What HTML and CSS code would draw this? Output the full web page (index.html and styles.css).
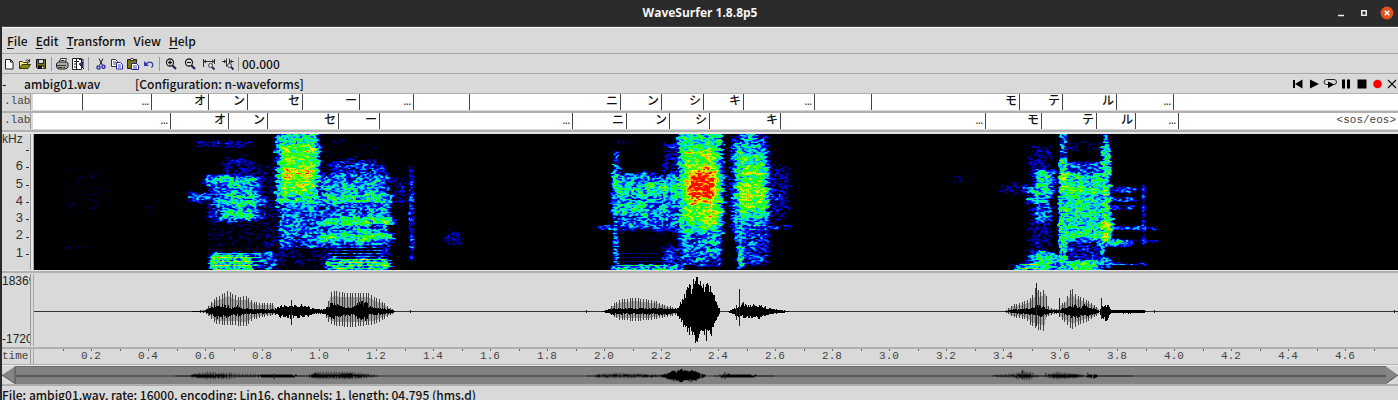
FILE: index.html
```html
<!DOCTYPE html>
<html lang="en">
<head>
<meta charset="utf-8">
<title>WaveSurfer 1.8.8p5</title>
<link rel="stylesheet" href="styles.css">
</head>
<body>
<header class="titlebar">
  <h1 class="title">WaveSurfer 1.8.8p5</h1>
  <div class="window-controls">
    <button class="win-btn" aria-label="Minimize"><svg width="14" height="14"><path d="M4 9.500h6" stroke="#eee" stroke-width="1.500"/></svg></button>
    <button class="win-btn" aria-label="Maximize"><svg width="14" height="14"><rect x="4.750" y="4.750" width="4.500" height="4.500" fill="none" stroke="#eee" stroke-width="1.500"/></svg></button>
    <button class="win-btn" aria-label="Close window"><svg width="14" height="14"><circle cx="7" cy="7" r="6.500" fill="#e2511c"/><path d="M4.700 4.700l4.600 4.600M9.300 4.700l-4.600 4.600" stroke="#fff" stroke-width="1.500"/></svg></button>
  </div>
</header>
<nav class="menubar">
  <button class="menu"><u>F</u>ile</button>
  <button class="menu"><u>E</u>dit</button>
  <button class="menu"><u>T</u>ransform</button>
  <button class="menu">View</button>
  <button class="menu"><u>H</u>elp</button>
</nav>
<div class="toolbar">
  <div class="tools">
    <button class="tool" aria-label="New"><svg width="14" height="14"><path d="M3.500 2.500h5l2.500 2.500v7h-7.500z" fill="#fff" stroke="#222"/><path d="M8.500 2.500v2.500h2.500" fill="none" stroke="#222"/></svg></button>
    <button class="tool" aria-label="Open"><svg width="14" height="14"><path d="M1.500 11.500v-7h3l1 1h4v2" fill="#f4ee8a" stroke="#3a3808"/><path d="M1.500 11.500l2.500-4h8.500l-2.500 4z" fill="#8b8a12" stroke="#3a3808"/><path d="M7.500 3.500q2-2 4 1M11.500 2v3h-2.500" fill="none" stroke="#333"/></svg></button>
    <button class="tool" aria-label="Save"><svg width="14" height="14"><path d="M2.500 2.500h9v9h-8l-1-1z" fill="#77761a" stroke="#111"/><path d="M4.500 2.500h5v4h-5z" fill="#ddd" stroke="#222"/><path d="M4 8.500h6v3h-6z" fill="#111"/><path d="M8 9.500h1.500v2h-1.500z" fill="#eee"/></svg></button>
  </div>
  <div class="tools">
    <button class="tool" aria-label="Print"><svg width="14" height="14"><path d="M4 6l1.500-4.500h6l-1.500 4.500z" fill="#fff" stroke="#333"/><path d="M1.500 6.500l2-1.500h8l1.500 1v4l-2 2h-8l-1.500-2z" fill="#aaa" stroke="#222"/><path d="M2 8.500h9M5.500 3.500h4M3 10.500h7" stroke="#333"/><path d="M7 10h2" stroke="#c9c520"/></svg></button>
    <button class="tool" aria-label="Print preview"><svg width="14" height="14"><path d="M1.500 1.500h9v11h-9z" fill="#fff" stroke="#222"/><path d="M3 4.500h5M5.500 2v10M3 7h2M3 10h2" stroke="#222"/><path d="M8 2.500h4M12 2v4M8 7l4-2v6zM10 9l3 3" fill="#334" stroke="#225"/></svg></button>
  </div>
  <div class="tools tools-edit">
    <button class="tool" aria-label="Cut"><svg width="14" height="14"><path d="M5 1.500l3.500 7M9 1.500l-3.500 7" stroke="#222" fill="none"/><circle cx="4.500" cy="10.500" r="1.600" fill="none" stroke="#22a" stroke-width="1.300"/><circle cx="9.500" cy="9.800" r="1.600" fill="none" stroke="#22a" stroke-width="1.300"/></svg></button>
    <button class="tool" aria-label="Copy"><svg width="14" height="14"><path d="M1.500 2.500h4l2 2v5h-6z" fill="#fff" stroke="#333"/><path d="M3 5h3M3 7h3" stroke="#555"/><path d="M6.500 5.500h4l2 2v4.500h-6z" fill="#fff" stroke="#22a"/><path d="M8 8h3M8 10h3" stroke="#449"/></svg></button>
    <button class="tool" aria-label="Paste"><svg width="14" height="14"><path d="M1.500 2.500h9v9h-9z" fill="#77761a" stroke="#222"/><path d="M4 3.500l1-2h2l1 2z" fill="#eee" stroke="#333"/><path d="M5.500 6.500h5l2 2v4h-7z" fill="#fff" stroke="#22a"/><path d="M7 9h4M7 11h4" stroke="#449"/></svg></button>
    <button class="tool" aria-label="Undo"><svg width="14" height="14"><path d="M3.500 7.500q4-4 7-1q1 2-1 4" fill="none" stroke="#33a" stroke-width="1.200"/><path d="M2 4v5h5z" fill="#33a"/></svg></button>
  </div>
  <div class="tools tools-wide">
    <button class="tool" aria-label="Zoom in"><svg width="14" height="14"><circle cx="6" cy="5.500" r="3.500" fill="#eee" stroke="#222" stroke-width="1.300"/><path d="M4 5.500h4M6 3.500v4" stroke="#111" stroke-width="1.300"/><path d="M8.500 8.500l3.500 3.500" stroke="#225" stroke-width="2.200"/></svg></button>
    <button class="tool" aria-label="Zoom out"><svg width="14" height="14"><circle cx="6" cy="5.500" r="3.500" fill="#eee" stroke="#222" stroke-width="1.300"/><path d="M4 5.500h4" stroke="#111" stroke-width="1.300"/><path d="M8.500 8.500l3.500 3.500" stroke="#225" stroke-width="2.200"/></svg></button>
    <button class="tool" aria-label="Zoom to all"><svg width="14" height="14"><path d="M1.500 2v8M12.500 2v5M2 4.500h10M4 3l-2 1.500 2 1.500M10 3l2 1.500-2 1.500" fill="none" stroke="#333"/><circle cx="8.500" cy="8.500" r="2" fill="#ddd" stroke="#444"/><path d="M10 10l2.500 2.500" stroke="#225" stroke-width="1.800"/></svg></button>
    <button class="tool" aria-label="Zoom to selection"><svg width="14" height="14"><path d="M5.500 1.500v8M8.500 1.500v6M1 4.500h4M9 4.500h4M3 3l2 1.500-2 1.500M11 3l-2 1.500 2 1.500" fill="none" stroke="#333"/><circle cx="8.500" cy="8.500" r="2" fill="#ddd" stroke="#444"/><path d="M10 10l2.500 2.500" stroke="#225" stroke-width="1.800"/></svg></button>
  </div>
  <output class="clock">00.000</output>
</div>
<main class="sound">
  <div class="pane-head">
    <span class="dash">-</span>
    <span class="sound-name">ambig01.wav</span>
    <span>[Configuration: n-waveforms]</span>
    <div class="transport">
      <button class="play" aria-label="To start"><svg width="14" height="12"><path d="M2 2h2v8h-2zM11.500 1.500v9l-7.500-4.500z"/></svg></button>
      <button class="play" aria-label="Play"><svg width="14" height="12"><path d="M3 1.500l9 4.500-9 4.500z"/></svg></button>
      <button class="play" aria-label="Loop"><svg width="14" height="12"><path d="M5 6.500h-1.500q-2.500 0-2.500-2.300t2.500-2.700h7.500q2.500 0 2.500 2.500t-2.500 2.500" fill="none" stroke="#222"/><path d="M5 3.500l6.500 3-6.500 3.500z"/></svg></button>
      <button class="play" aria-label="Pause"><svg width="14" height="12"><path d="M3 1.500h3v9h-3zM8 1.500h3v9h-3z"/></svg></button>
      <button class="play" aria-label="Stop"><svg width="14" height="12"><path d="M2.500 1.500h9v9h-9z"/></svg></button>
      <button class="play" aria-label="Record"><svg width="14" height="12"><circle cx="6.500" cy="6" r="4.300" fill="#f00"/></svg></button>
      <button class="play play-last" aria-label="Close sound"><svg width="12" height="12"><path d="M2 2l8 8M10 2l-8 8" stroke="#111" stroke-width="1.200"/></svg></button>
    </div>
  </div>
  <section class="track track-label">
    <div class="side mono">.lab</div>
    <div class="labels" style="grid-template-columns:50fr 69fr 57fr 39fr 55fr 57fr 54fr 56fr 151fr 41fr 42fr 40fr 71fr 57fr 148fr 43fr 54fr 57fr 224fr">
      <span></span><span>…</span><span>オ</span><span>ン</span><span>セ</span><span>ー</span><span>…</span><span></span><span>ニ</span><span>ン</span><span>シ</span><span>キ</span><span>…</span><span></span><span>モ</span><span>テ</span><span>ル</span><span>…</span><span></span>
    </div>
  </section>
  <section class="track track-label">
    <div class="side mono">.lab</div>
    <div class="labels" style="grid-template-columns:138fr 58fr 39fr 71fr 41fr 193fr 54fr 43fr 40fr 71fr 205fr 56fr 55fr 39fr 43fr 219fr">
      <span>…</span><span>オ</span><span>ン</span><span>セ</span><span>ー</span><span>…</span><span>ニ</span><span>ン</span><span>シ</span><span>キ</span><span>…</span><span>モ</span><span>テ</span><span>ル</span><span>…</span><span class="mono">&lt;sos/eos&gt;</span>
    </div>
  </section>
  <section class="track track-spec">
    <div class="side khz"><span class="unit">kHz</span><span></span><span>6</span><span>5</span><span>4</span><span>3</span><span>2</span><span>1</span></div>
    <div class="plot"><canvas id="spec" width="1364" height="136"></canvas></div>
  </section>
  <section class="track track-wave">
    <div class="side range"><span>18369</span><span>-17205</span></div>
    <div class="plot"><canvas id="wave" width="1364" height="72"></canvas></div>
  </section>
  <section class="track track-time">
    <div class="side mono">time</div>
    <div class="plot times mono">
      <i></i><span>0.2</span><span>0.4</span><span>0.6</span><span>0.8</span><span>1.0</span><span>1.2</span><span>1.4</span><span>1.6</span><span>1.8</span><span>2.0</span><span>2.2</span><span>2.4</span><span>2.6</span><span>2.8</span><span>3.0</span><span>3.2</span><span>3.4</span><span>3.6</span><span>3.8</span><span>4.0</span><span>4.2</span><span>4.4</span><span>4.6</span><i class="edge"></i>
    </div>
  </section>
  <div class="scroller">
    <button class="arrow" aria-label="Scroll left"><svg width="13" height="18"><path d="M0 9l13-8.500v17z" fill="#858585"/><path d="M0 9l13 8.500v-17" fill="none" stroke="#555"/></svg></button>
    <div class="trough"><canvas id="overview" width="1371" height="18"></canvas></div>
    <button class="arrow" aria-label="Scroll right"><svg width="12" height="18"><path d="M12 9l-12-8.500v17z" fill="#858585"/><path d="M0 17.500l12-8.500" stroke="#555"/></svg></button>
  </div>
</main>
<footer class="status">File: ambig01.wav, rate: 16000, encoding: Lin16, channels: 1, length: 04.795 (hms.d)</footer>
<script src="plots.js"></script>
</body>
</html>
```
FILE: styles.css
```css
* { box-sizing: border-box; }
body {
  margin: 0;
  height: 100vh;
  overflow: hidden;
  display: flex;
  flex-direction: column;
  background: #d9d9d9;
  border-left: 2px solid #2a2a2c;
  color: #111;
  font: 500 12px/18px "Noto Sans CJK JP", "Noto Sans", sans-serif;
}
button { border: 0; padding: 0; background: none; color: inherit; font: inherit; }
svg, canvas { display: block; }
.mono { font: 11px/14px "Liberation Mono", monospace; color: #444; }

.titlebar {
  flex: none;
  height: 27px;
  display: grid;
  grid-template-columns: 1fr auto 1fr;
  align-items: center;
  background: #2b2b2b;
  border-bottom: 1px solid #444;
}
.title { grid-column: 2; margin: 0; color: #f4f4f4; font: bold 12px/18px "Open Sans", sans-serif; }
.window-controls { display: flex; justify-content: flex-end; gap: 9px; padding-right: 4px; }
.win-btn { width: 14px; height: 14px; }

.menubar {
  flex: none;
  height: 27px;
  display: flex;
  align-items: center;
  gap: 8px;
  padding-left: 5px;
  border-top: 1px solid #f4f4f4;
  border-bottom: 1px solid #a8a8a8;
}
.menu u { text-underline-offset: 2px; }
.toolbar {
  flex: none;
  height: 20px;
  display: flex;
  align-items: center;
  border-bottom: 1px solid #a8a8a8;
}
.tools { display: flex; gap: 1px; padding-right: 2px; margin-right: 3px; border-right: 1px solid #999; }
.tool { width: 15px; height: 14px; }
.tools-edit { padding-left: 2px; }
.tools-wide { gap: 4px; padding-left: 1px; }

.sound { flex: none; display: flex; flex-direction: column; }
.pane-head { height: 20px; display: flex; align-items: center; border-bottom: 1px solid #b0b0b0; }
.dash { width: 22px; }
.sound-name { width: 111px; }
.transport { margin-left: auto; display: flex; }
.play { width: 16px; display: grid; place-items: center; }
.play-last { width: 12px; }

.track { display: grid; grid-template-columns: 29px minmax(0, 1fr); column-gap: 2px; border-bottom: 2px solid #b0b0b0; }
.side { border-right: 1px solid #999; overflow: hidden; white-space: nowrap; }
.plot { min-width: 0; overflow: hidden; border-left: 1px solid #f0a020; }
.plot canvas { width: 100%; height: 100%; }
.track-label { height: 19px; padding-bottom: 1px; }
.track-label .side { padding-left: 2px; }
.labels { display: grid; background: #fff; font: 500 12px/16px "Liberation Mono", "Noto Sans CJK JP", sans-serif; }
.labels span { min-width: 0; padding-right: 2px; text-align: right; border-right: 1px solid #444; overflow: hidden; }
.labels span:last-child { border-right: 0; }

.track-spec { height: 141px; padding: 2px 0 1px; background: #e6e6e6; }
.track-spec .plot { background: #000; }
.khz {
  display: grid;
  grid-template-rows: 8fr repeat(7, minmax(0, 17fr)) 7fr;
  background: #d9d9d9;
  font: 13px/13px "Liberation Sans", sans-serif;
  color: #333;
}
.khz span { padding-right: 7px; text-align: right; background: linear-gradient(#333, #333) right 1px center / 3px 1px no-repeat; }
.khz .unit { height: 8px; padding: 0; font-size: 12px; line-height: 11px; text-align: left; background: none; }

.track-wave { height: 76px; padding: 1px 0; }
.range { display: flex; flex-direction: column; justify-content: space-between; font: 12px/14px "Liberation Sans", sans-serif; color: #222; }
.track-time { height: 16px; border-bottom-width: 1px; }
.times { display: grid; grid-template-columns: 57fr repeat(23, 114fr) 49fr; text-align: center; }
.times span {
  min-width: 0;
  background: linear-gradient(#666, #666) left top / 1px 2px no-repeat, linear-gradient(#666, #666) center top / 1px 2px no-repeat;
}
.edge { background: linear-gradient(#666, #666) left top / 1px 2px no-repeat; }
.scroller { height: 20px; display: flex; align-items: center; border-top: 1px solid #eee; border-bottom: 1px solid #b0b0b0; }
.arrow { flex: none; }
.trough { flex: 1; min-width: 0; height: 18px; background: #828282; border: solid #666; border-width: 1px 0 0 1px; }
.trough canvas { width: 100%; height: 100%; }
.status { flex: none; border-top: 1px solid #aaa; white-space: nowrap; }
```
FILE: plots.js
```js
const LEFT = 34;
const TOP = 135;

function hash(x, y, s) {
  let h = Math.imul(x, 374761393) + Math.imul(y, 668265263) + Math.imul(s, 974711);
  h = Math.imul(h ^ (h >>> 13), 1274126177);
  return ((h ^ (h >>> 16)) >>> 0) / 4294967296;
}
function noise(x, y, s) {
  const xi = Math.floor(x), yi = Math.floor(y), fx = x - xi, fy = y - yi;
  const a = hash(xi, yi, s) * (1 - fx) + hash(xi + 1, yi, s) * fx;
  const b = hash(xi, yi + 1, s) * (1 - fx) + hash(xi + 1, yi + 1, s) * fx;
  return a * (1 - fy) + b * fy;
}

// Energy regions: x0, x1, y0, y1, x softness, y softness, level
const boxes = [
  [226, 246, 182, 216, 28, 12, .45], [214, 248, 179, 183, 18, 5, .5], [226, 250, 197, 205, 26, 8, .52],
  [194, 208, 196, 199, 12, 6, .42], [226, 246, 212, 217, 14, 6, .53], [200, 250, 143, 146, 12, 4, .25],
  [228, 248, 163, 178, 16, 12, .26], [212, 256, 225, 255, 18, 14, .19], [214, 248, 257, 269, 8, 6, .58],
  [250, 273, 255, 268, 6, 5, .4], [258, 275, 170, 268, 8, 20, .22],
  [279, 315, 136, 203, 7, 14, .52], [285, 310, 152, 188, 14, 24, .66], [287, 310, 172, 179, 16, 14, .73],
  [282, 322, 200, 244, 8, 10, .4], [284, 312, 238, 246, 12, 6, .4], [280, 325, 245, 264, 8, 12, .22],
  [325, 385, 178, 243, 9, 10, .42], [340, 372, 166, 178, 24, 12, .33], [335, 378, 182, 200, 12, 8, .47],
  [328, 386, 196, 201, 10, 5, .55], [330, 386, 219, 224, 14, 4, .58], [322, 388, 235, 240, 10, 5, .56],
  [325, 386, 243, 263, 8, 8, .27], [330, 386, 261, 269, 8, 5, .53], [387, 402, 183, 200, 12, 12, .24],
  [410, 412.500, 175, 245, 3, 16, .33],
  [614, 616.500, 158, 266, 3, 12, .4], [614, 618, 178, 211, 5, 16, .48], [618, 674, 180, 224, 8, 12, .43],
  [622, 668, 190, 195, 14, 8, .52], [618, 645, 204, 211, 12, 6, .52], [608, 680, 227, 229, 20, 3, .37],
  [650, 678, 185, 192, 14, 6, .57], [618, 676, 230, 262, 12, 10, .16], [667, 677, 250, 269, 10, 10, .33],
  [622, 660, 142, 165, 16, 12, .15], [612, 680, 267, 270, 6, 4, .5], [666, 676, 150, 180, 7, 14, .28],
  [682, 717, 136, 226, 9, 26, .54], [688, 712, 156, 212, 14, 32, .69], [698, 704, 182, 190, 28, 36, .93],
  [706, 714, 200, 222, 14, 16, .68], [685, 717, 226, 256, 8, 18, .42],
  [737, 762, 152, 220, 12, 28, .47], [741, 760, 164, 212, 14, 22, .59], [744, 756, 172, 176, 12, 10, .68], [744, 760, 188, 206, 14, 14, .68],
  [742, 758, 134, 150, 8, 12, .44], [735, 737, 145, 236, 2, 12, .48], [739, 742, 190, 264, 5, 10, .46],
  [743, 762, 228, 260, 14, 12, .34], [764, 780, 178, 210, 20, 22, .28], [735, 785, 227, 228, 12, 4, .33],
  [1040, 1047, 175, 194, 12, 10, .54], [1030, 1046, 189, 193, 16, 5, .42], [1032, 1040, 199, 203, 12, 4, .48],
  [1040, 1047, 209, 220, 10, 8, .42], [1034, 1046, 152, 262, 14, 12, .25], [1040, 1047, 257, 269, 18, 8, .56],
  [1024, 1047, 266, 270, 20, 5, .54], [1005, 1026, 187, 192, 16, 9, .23],
  [1060, 1065, 162, 270, 4, 14, .55], [1062, 1063, 134, 165, 5, 14, .43], [1061, 1066, 174, 184, 5, 8, .68],
  [1064, 1099, 178, 236, 6, 12, .52], [1068, 1096, 190, 194, 8, 5, .62], [1069, 1097, 168, 176, 10, 10, .4],
  [1066, 1099, 234, 237, 6, 5, .6], [1064, 1099, 242, 262, 6, 6, .3], [1068, 1095, 263, 269, 8, 5, .56],
  [1067, 1100, 144, 150, 8, 5, .2], [1104, 1107, 155, 220, 6, 16, .57], [1105, 1106, 134, 155, 5, 10, .43],
  [1103, 1108, 223, 238, 7, 8, .68], [1101, 1103, 239, 266, 3, 10, .45], [1107, 1109, 260, 266, 5, 5, .46],
  [1108, 1130, 189, 192, 8, 3, .38], [1108, 1132, 199, 201, 8, 3, .36], [1108, 1130, 207, 209, 8, 3, .34],
  [1108, 1152, 228, 229, 10, 3, .37], [1108, 1128, 242, 245, 8, 4, .42], [1120, 1156, 241, 242, 8, 2, .31],
  [1108, 1142, 264, 265, 8, 3, .34], [1142.500, 1144, 188, 242, 3, 8, .3],
  [72, 102, 172, 205, 28, 20, .17], [147, 151, 208, 212, 5, 5, .2], [448, 458, 234, 242, 10, 8, .23],
  [40, 90, 248, 249, 8, 3, .18], [955, 960, 178, 182, 5, 4, .22], [330, 375, 140, 160, 16, 10, .17],
  [450, 458, 180, 190, 8, 8, .15], [618, 630, 142, 144, 8, 3, .2]
];
const dots = [[411, 183], [411, 200], [411, 220], [411, 237], [411, 258], [1143, 190], [1143, 208], [1143, 229], [1143, 241]];
// Harmonic line areas: x0, x1, y0, y1, spacing
const harmonics = [[212, 268, 251, 270, 4], [325, 388, 246, 270, 3], [612, 668, 251, 270, 4], [1014, 1048, 262, 270, 4], [1110, 1144, 262, 270, 4]];

const stops = [[0, 0, 0, 0], [.2, 0, 0, 0], [.31, 0, 0, 190], [.38, 0, 25, 255], [.46, 0, 190, 255], [.53, 0, 250, 190],
  [.6, 0, 255, 20], [.68, 90, 255, 0], [.77, 240, 250, 0], [.86, 255, 130, 0], [.91, 255, 10, 0], [3, 255, 0, 0]];
function color(v) {
  let i = 1;
  while (v > stops[i][0]) i++;
  const a = stops[i - 1], b = stops[i], t = (v - a[0]) / (b[0] - a[0]);
  return [1, 2, 3].map(k => a[k] + (b[k] - a[k]) * t);
}

function drawSpectrogram() {
  const c = document.getElementById("spec"), g = c.getContext("2d"), w = c.width, h = c.height;
  const field = new Float32Array(w * h);
  for (const [x0, x1, y0, y1, sx, sy, level] of boxes) {
    for (let y = Math.max(0, Math.floor(y0 - sy - TOP - 2)); y < Math.min(h, y1 + sy - TOP + 2); y++) {
      for (let x = Math.max(0, Math.floor(x0 - sx - LEFT - 3)); x < Math.min(w, x1 + sx - LEFT + 3); x++) {
        const px = x + LEFT + (noise(x / 6, y / 1.500, 11) - .5) * Math.min(6, sx * .8);
        const py = y + TOP + (noise(x / 5, y / 3, 12) - .5) * Math.min(4, sy * .6);
        const dx = Math.max(x0 - px, px - x1, 0) / sx, dy = Math.max(y0 - py, py - y1, 0) / sy;
        const d = dx * dx + dy * dy;
        const v = d >= 1 ? 0 : level * (1 - d) * (1 - d * .3);
        if (v > field[y * w + x]) field[y * w + x] = v;
      }
    }
  }
  const img = g.createImageData(w, h);
  for (let y = 0; y < h; y++) {
    for (let x = 0; x < w; x++) {
      const px = x + LEFT, py = y + TOP;
      let v = field[y * w + x];
      if (v > 0) {
        const n = noise(x / 2.300, y / 1.300, 1) * .75 + noise(x / 7, y / 2.500, 7) * .25 - .5;
        v += n * .54 * Math.min(1, v * 2.800);
      }
      for (const [x0, x1, y0, y1, gap] of harmonics) {
        if (px >= x0 && px < x1 && py >= y0 && py < y1) {
          const depth = (py - y0) / (y1 - y0), fade = Math.min(1, (px - x0) / 8, (x1 - px) / 12);
          v += fade * ((py - y0) % gap === gap - 1 ? .1 + .05 * depth : -.07);
        }
      }
      for (const [dx, dy] of dots) {
        const d = Math.hypot(px - dx, py - dy);
        if (d < 4) v = Math.max(v, .46 - d * .07);
      }
      const rgb = color(Math.max(0, v)), o = (y * w + x) * 4;
      img.data[o] = rgb[0]; img.data[o + 1] = rgb[1]; img.data[o + 2] = rgb[2]; img.data[o + 3] = 255;
    }
  }
  g.putImageData(img, 0, 0);
}

// Envelopes are lists of [x, height] above and below the axis; core is the dense inner part.
const sounds = [
  { voiced: true, up: [[192, 0], [205, 1], [210, 8], [215, 13], [220, 16], [228, 20], [232, 17], [238, 14], [246, 15], [252, 10], [258, 8], [273, 8], [275, 2]],
    down: [[192, 0], [205, 1], [210, 6], [216, 12], [226, 13], [246, 14], [252, 8], [262, 5], [275, 3]],
    core: [[205, 1], [212, 4], [218, 8], [228, 6], [233, 3], [238, 6], [243, 3], [255, 2], [275, 2]] },
  { up: [[273, 2], [280, 6], [290, 7], [300, 7], [308, 6], [315, 2], [325, 2]], down: [[273, 2], [280, 6], [290, 7], [300, 6], [308, 5], [315, 2], [325, 2]] },
  { voiced: true, up: [[324, 1], [327, 6], [330, 18], [334, 20], [345, 18], [360, 18], [368, 18], [374, 14], [380, 11], [388, 4], [395, 0]],
    down: [[324, 1], [328, 10], [335, 14], [350, 15], [362, 14], [375, 12], [385, 6], [395, 0]],
    core: [[324, 2], [330, 8], [335, 8], [345, 4], [352, 4], [357, 8], [364, 11], [369, 5], [380, 3], [390, 2], [395, 0]] },
  { voiced: true, up: [[602, 0], [608, 1], [612, 6], [616, 9], [622, 12], [633, 13], [645, 12], [655, 10], [665, 6], [675, 3], [680, 3]],
    down: [[602, 0], [608, 1], [612, 4], [620, 8], [635, 9], [650, 8], [665, 5], [680, 2]], core: [[602, 0], [612, 3], [640, 3], [665, 3], [680, 2]] },
  { up: [[676, 2], [681, 12], [685, 24], [690, 31], [697, 38], [702, 34], [704, 30], [708, 30], [712, 24], [716, 11], [720, 1]],
    down: [[676, 2], [681, 12], [686, 26], [692, 30], [697, 36], [704, 33], [710, 30], [714, 15], [720, 1]] },
  { up: [[728, 0], [737, 5], [743, 10], [750, 7], [760, 7], [768, 4], [775, 2], [789, 0]], down: [[728, 0], [737, 6], [750, 7], [760, 8], [768, 3], [775, 2], [789, 0]] },
  { voiced: true, up: [[1005, 0], [1012, 6], [1020, 8], [1028, 11], [1034, 18], [1036, 28], [1039, 18], [1045, 23], [1047, 6], [1050, 3], [1058, 1]],
    down: [[1005, 0], [1012, 5], [1025, 7], [1030, 13], [1036, 17], [1044, 19], [1046, 5], [1058, 1]], core: [[1005, 0], [1015, 2], [1030, 3], [1036, 6], [1044, 5], [1050, 1], [1058, 1]] },
  { voiced: true, up: [[1058, 2], [1060, 7], [1064, 9], [1068, 17], [1071, 23], [1075, 17], [1082, 13], [1090, 9], [1099, 2]],
    down: [[1058, 1], [1060, 6], [1068, 14], [1072, 17], [1080, 12], [1090, 8], [1099, 2]], core: [[1058, 1], [1068, 5], [1074, 8], [1080, 4], [1085, 7], [1090, 4], [1099, 1]] },
  { up: [[1100, 3], [1103, 8], [1107, 9], [1109, 4], [1111, 1], [1130, 2], [1144, 1], [1146, 0]], down: [[1100, 3], [1103, 8], [1106, 11], [1109, 4], [1111, 1], [1130, 2], [1144, 1], [1146, 0]] }
];
const spikes = [[291, 11, 13], [739, 22, 14], [736, 6, 8], [1036, 28, 14], [1059, 13, 5], [1101, 13, 7], [410, 1, 1], [586, 1, 1], [1154, 1, 1], [1394, 1, 1]];

function level(points, x) {
  for (let i = 1; i < points.length; i++) {
    const [x0, y0] = points[i - 1], [x1, y1] = points[i];
    if (x >= x0 && x <= x1) return y0 + (y1 - y0) * (x - x0) / (x1 - x0);
  }
  return 0;
}

function drawWave(id, mid, scale, stretch, axis) {
  const c = document.getElementById(id), g = c.getContext("2d");
  const bar = (x, up, down, style) => {
    const top = Math.round(up * scale), bottom = Math.round(down * scale);
    g.fillStyle = style;
    g.fillRect(Math.round((x - LEFT) * stretch), mid - top, 1, top + bottom + 1);
  };
  g.fillStyle = axis;
  g.fillRect(0, mid, c.width, 1);
  for (const s of sounds) {
    const from = s.up[0][0], to = s.up[s.up.length - 1][0];
    for (let x = from; x < to; x++) {
      const up = level(s.up, x), down = level(s.down, x), r = hash(x, 3, 5), q = hash(x, 8, 2);
      if (s.voiced) {
        const peak = Math.floor(x * 3 / 8) !== Math.floor((x - 1) * 3 / 8);
        bar(x, up * (peak ? 1 : .75), down * (peak ? 1 : .7), peak ? "#444" : "rgba(0,0,0,.25)");
        const core = level(s.core, x);
        bar(x, core * (.5 + r * .6), core * (.4 + q * .6), "#000");
      } else {
        bar(x, up * (.5 + r * .45), down * (.5 + q * .45), "#000");
      }
    }
  }
  for (const [x, up, down] of spikes) bar(x, up, down, "#222");
}

drawSpectrogram();
drawWave("wave", 37, 1, 1, "#333");
drawWave("overview", 9, .2, 1371 / 1364, "#333");
```
